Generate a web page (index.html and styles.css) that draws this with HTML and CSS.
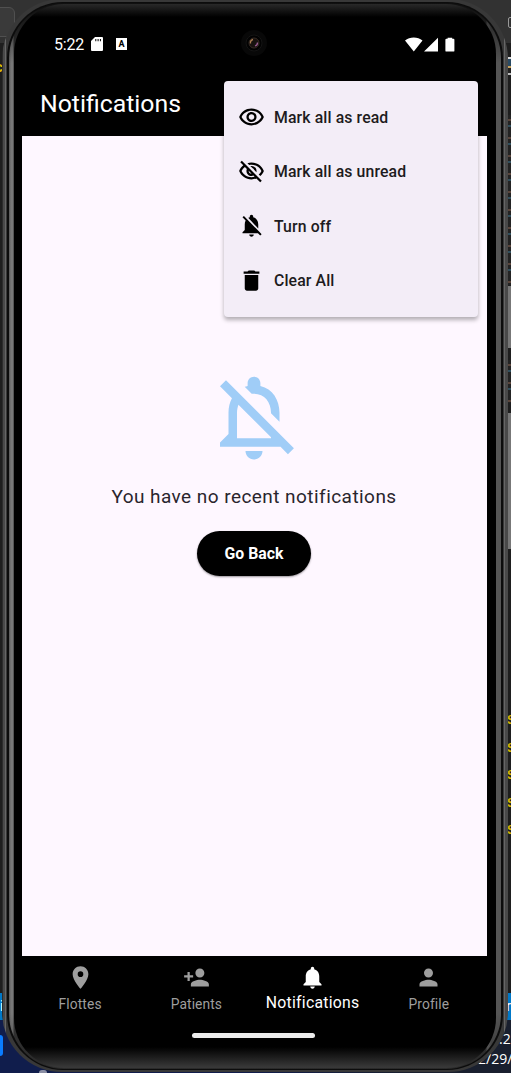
FILE: index.html
```html
<!DOCTYPE html>
<html lang="en">
<head>
<meta charset="utf-8">
<title>Notifications</title>
<link rel="stylesheet" href="styles.css">
</head>
<body>
<div class="desktop">
  <div class="editor">
    <span class="tab-box"></span>
    <span class="tab-box-right"></span>
    <span class="mark-left">c</span>
    <span class="code code-top"></span>
    <span class="code code-a"></span>
    <span class="scroll scroll-a"></span>
    <span class="code code-b"></span>
    <span class="scroll scroll-b"></span>
    <span class="warn warn-1">S</span>
    <span class="warn warn-2">S</span>
    <span class="warn warn-3">S</span>
    <span class="warn warn-4">S</span>
    <span class="warn warn-5">S</span>
  </div>
  <div class="statusline"><span>i</span><span>r</span></div>
  <div class="taskbar">
    <span class="task-app"></span>
    <span class="task-dot"></span>
    <div class="clock"><span>:2</span><span>2/29/</span></div>
  </div>
</div>

<div class="phone">
  <div class="groove">
    <div class="rim">
      <div class="glass">
        <div class="screen">
          <div class="status">
            <span class="time">5:22</span>
            <svg class="sd" viewBox="0 0 12 14"><path fill="#fff" fill-rule="evenodd" d="M4 0h7a1 1 0 0 1 1 1v12a1 1 0 0 1-1 1H1a1 1 0 0 1-1-1V4zM4.3 2v2.3h1V2zm2.3 0v2.3h1V2zm2.3 0v2.3h1V2z"/></svg>
            <span class="abox">A</span>
            <svg class="camera" viewBox="0 0 28 28"><circle cx="14" cy="14" r="13" fill="#080808"/><circle cx="14" cy="14" r="8" fill="#020202" stroke="#141414"/><circle cx="14" cy="14" r="5" fill="#17120f" stroke="#382b25"/><path d="M10.500 14.500a3.500 3.500 0 0 1 2.500-4" stroke="#a87b50" stroke-width="1.300" fill="none"/><path d="M15 17a3.500 3.500 0 0 0 2.500-3.500" stroke="#9a5b90" stroke-width="1.300" fill="none"/></svg>
            <svg class="signals" viewBox="0 0 51 15"><path fill="#fff" d="M0 3.500C4.700-.6 12.800-.6 17.500 3.500L8.800 14.500zM19 14.500L33 .7v13.800zM42.600.8h4.600v1h1.300a.9.9 0 0 1 .9.9v11a.9.9 0 0 1-.9.9h-7.200a.9.9 0 0 1-.9-.9v-11a.9.9 0 0 1 .9-.9h1.300z"/></svg>
          </div>
          <header class="appbar"><h1>Notifications</h1></header>
          <main class="content">
            <svg class="empty-icon" viewBox="0 0 24 24"><path d="M12 22c1.100 0 2-.9 2-2h-4c0 1.100.9 2 2 2zm0-15.500c2.490 0 4 2.020 4 4.500v.1l2 2V11c0-3.070-1.630-5.640-4.500-6.320V4c0-.83-.67-1.500-1.500-1.500s-1.500.67-1.500 1.500v.68c-.24.060-.47.150-.69.230l1.640 1.640c.18-.02.36-.05.55-.05zM5.410 3.350L4 4.760l2.810 2.810C6.290 8.570 6 9.730 6 11v5l-2 2v1h14.240l1.740 1.740 1.410-1.410L5.410 3.350zM16 17H8v-6c0-.68.12-1.320.34-1.900L16 16.760V17z"/></svg>
            <p class="empty-text">You have no recent notifications</p>
            <button class="back">Go Back</button>
          </main>
          <nav class="tabs">
            <a class="tab"><svg viewBox="0 0 24 24"><path d="M12 2C8.130 2 5 5.130 5 9c0 5.250 7 13 7 13s7-7.750 7-13c0-3.870-3.130-7-7-7zm0 9.500a2.500 2.500 0 0 1 0-5 2.500 2.500 0 0 1 0 5z"/></svg><span>Flottes</span></a>
            <a class="tab"><svg viewBox="0 0 24 24"><path d="M15 12c2.210 0 4-1.790 4-4s-1.790-4-4-4-4 1.790-4 4 1.790 4 4 4zm-9-2V7H4v3H1v2h3v3h2v-3h3v-2H6zm9 4c-2.670 0-8 1.340-8 4v2h16v-2c0-2.660-5.330-4-8-4z"/></svg><span>Patients</span></a>
            <a class="tab active"><svg viewBox="0 0 24 24"><path d="M12 22c1.100 0 2-.9 2-2h-4c0 1.100.89 2 2 2zm6-6v-5c0-3.070-1.640-5.640-4.500-6.320V4c0-.83-.67-1.500-1.500-1.500s-1.500.67-1.500 1.500v.68C7.630 5.360 6 7.920 6 11v5l-2 2v1h16v-1l-2-2z"/></svg><span>Notifications</span></a>
            <a class="tab"><svg viewBox="0 0 24 24"><path d="M12 12c2.210 0 4-1.790 4-4s-1.790-4-4-4-4 1.790-4 4 1.790 4 4 4zm0 2c-2.670 0-8 1.340-8 4v2h16v-2c0-2.660-5.330-4-8-4z"/></svg><span>Profile</span></a>
          </nav>
          <div class="gesture"></div>
          <div class="menu">
            <div class="item"><svg viewBox="0 0 24 24"><path d="M12 6c3.790 0 7.170 2.130 8.820 5.500C19.170 14.870 15.790 17 12 17s-7.170-2.130-8.820-5.500C4.830 8.130 8.210 6 12 6m0-2C7 4 2.730 7.110 1 11.500 2.730 15.890 7 19 12 19s9.270-3.110 11-7.500C21.270 7.110 17 4 12 4zm0 5c1.380 0 2.500 1.120 2.500 2.500S13.380 14 12 14s-2.500-1.120-2.500-2.500S10.620 9 12 9m0-2c-2.480 0-4.500 2.020-4.500 4.500S9.520 16 12 16s4.500-2.020 4.500-4.500S14.480 7 12 7z"/></svg><span>Mark all as read</span></div>
            <div class="item"><svg viewBox="0 0 24 24"><path d="M12 6c3.790 0 7.170 2.130 8.820 5.500-.59 1.220-1.420 2.270-2.410 3.120l1.410 1.410c1.390-1.230 2.490-2.770 3.180-4.530C21.270 7.110 17 4 12 4c-1.270 0-2.490.2-3.640.57l1.650 1.650C10.660 6.090 11.320 6 12 6zm-1.070 1.140L13 9.210c.57.25 1.030.71 1.280 1.280l2.070 2.070c.08-.34.14-.7.14-1.070C16.500 9.010 14.480 7 12 7c-.37 0-.72.05-1.070.14zM2.010 3.870l2.680 2.680C3.060 7.830 1.770 9.530 1 11.500 2.730 15.890 7 19 12 19c1.520 0 2.980-.29 4.320-.82l3.420 3.420 1.410-1.410L3.420 2.450 2.010 3.870zm7.500 7.500l2.610 2.610c-.04.010-.08.020-.12.020-1.380 0-2.500-1.120-2.500-2.500 0-.05.010-.08.010-.13zm-3.400-3.400l1.750 1.750c-.23.550-.36 1.150-.36 1.780 0 2.480 2.020 4.500 4.500 4.500.63 0 1.230-.13 1.770-.36l.98.98c-.88.24-1.800.38-2.750.38-3.790 0-7.170-2.130-8.820-5.500.7-1.430 1.720-2.610 2.930-3.530z"/></svg><span>Mark all as unread</span></div>
            <div class="item"><svg viewBox="0 0 24 24"><path d="M20 18.690L7.840 6.140 5.270 3.490 4 4.760l2.800 2.800v.010c-.52.990-.8 2.160-.8 3.420v5l-2 2v1h13.730l2 2L21 19.720l-1-1.030zM12 22c1.110 0 2-.89 2-2h-4c0 1.110.89 2 2 2zm6-7.320V11c0-3.080-1.640-5.640-4.500-6.320V4c0-.83-.67-1.500-1.500-1.500s-1.500.67-1.500 1.500v.68c-.15.030-.29.080-.42.120-.1.030-.2.070-.3.110-.24.090-.47.200-.7.310L18 14.680z"/></svg><span>Turn off</span></div>
            <div class="item"><svg viewBox="0 0 24 24"><path d="M6 19c0 1.100.9 2 2 2h8c1.100 0 2-.9 2-2V7H6v12zM19 4h-3.500l-1-1h-5l-1 1H5v2h14V4z"/></svg><span>Clear All</span></div>
          </div>
        </div>
      </div>
    </div>
  </div>
</div>
</body>
</html>
```
FILE: styles.css
```css
* { box-sizing: border-box; }
body {
  margin: 0;
  position: relative;
  width: 511px;
  height: 1073px;
  overflow: hidden;
  font-family: Roboto, "Liberation Sans", sans-serif;
}
svg { display: block; }

/* Desktop behind the emulator window */
.desktop { display: flex; flex-direction: column; height: 1073px; background: #1e1e1e; }
.editor {
  position: relative;
  height: 993px;
  background: linear-gradient(#323232 0 43px, #1e1e1e 43px);
}
.editor span { position: absolute; }
.tab-box { left: -10px; top: 7px; width: 25px; height: 30px; border: 1px solid #505050; border-radius: 6px; background: #3a3a3a; }
.tab-box-right { left: 508px; top: 17px; width: 10px; height: 11px; border: 1px solid #999; border-radius: 2px; }
.mark-left { left: -5px; top: 58px; font-size: 15px; font-weight: 700; color: #d9b800; }
.code { left: 508px; width: 3px; opacity: .6; background: repeating-linear-gradient(#272727 0 4px, #826050 4px 6px, #272727 6px 10px, #3e7188 10px 12px, #272727 12px 18px); }
.code-top { top: 57px; height: 18px; opacity: 1; background: linear-gradient(#d8d8d8 0 2px, #294a63 2px 9px, #c9a25b 9px 11px, #222 11px 16px, #bbb 16px); }
.code-a { top: 115px; height: 170px; }
.code-b { top: 360px; height: 43px; }
.scroll { left: 508px; width: 3px; background: #777; }
.scroll-a { top: 286px; height: 62px; }
.scroll-b { top: 413px; height: 136px; }
.warn { left: 507px; font: 700 13px "Liberation Mono", monospace; color: #d1b300; }
.warn-1 { top: 713px; }
.warn-2 { top: 741px; }
.warn-3 { top: 768px; }
.warn-4 { top: 796px; }
.warn-5 { top: 823px; }
.statusline { display: flex; justify-content: space-between; height: 27px; line-height: 27px; background: #0078c8; color: #fff; font-size: 14px; }
.taskbar { position: relative; flex: 1; background: linear-gradient(90deg, #101d4c 0 50%, #191f2e 80%); }
.task-app { position: absolute; left: -20px; top: 15px; width: 23px; height: 21px; border-radius: 3px; background: #0a7cff; }
.task-dot { position: absolute; left: 39px; top: 50px; width: 8px; height: 6px; border-radius: 3px; background: #8b8fa5; }
.clock { position: absolute; left: 478px; top: 9px; display: flex; flex-direction: column; line-height: 20px; font-family: "Open Sans", sans-serif; font-size: 14px; color: #fff; }
.clock span:first-child { padding-left: 21px; }

/* Device body: nested rings */
.phone { position: absolute; left: 2px; top: -1px; width: 506px; height: 1073px; padding: 3px 5px 2px; border-radius: 60px; background: linear-gradient(90deg, #2c2c2c 0 1px, #494949 1px 3px, #666 3px 4px, #383838 4px 50%, #383838 502px, #666 502px 503px, #494949 503px); }
.groove { height: 100%; padding: 1px 2px; border-radius: 56px; background: #0c0c0c; }
.rim { height: 100%; padding: 1px 5px; border-radius: 55px; background: linear-gradient(rgba(10,10,10,.85), transparent 60px, transparent 1010px, rgba(40,40,40,.8)), linear-gradient(90deg, #555 0, #777 2px, #777 4px, #333 5px, #333 477px, #777 478px, #777 480px, #555 482px); }
.glass { height: 100%; padding: 12px 9px 16px 8px; border-radius: 50px; background: linear-gradient(#292929, #000 13px, #000 1043px, #383838 1063px); }
.screen { position: relative; display: flex; flex-direction: column; height: 100%; }

.status { position: relative; display: flex; align-items: center; height: 56px; padding: 0 31px 0 32px; color: #fff; }
.time { width: 37px; font-size: 16px; letter-spacing: -.2px; }
.sd { width: 12px; height: 14px; }
.abox { display: flex; align-items: center; justify-content: center; width: 11px; height: 12px; margin-left: 13px; background: #fff; color: #000; font-size: 9px; font-weight: 700; }
.camera { position: absolute; left: 218px; top: 13px; width: 28px; height: 28px; }
.signals { width: 51px; height: 15px; margin-left: auto; }

.appbar { display: flex; align-items: center; height: 64px; padding-left: 18px; color: #fff; }
.appbar h1 { margin: 0; font-size: 24.8px; font-weight: 400; line-height: 30px; }

.content { display: flex; flex-direction: column; align-items: center; height: 820px; padding: 230px 1px 0 0; background: #fef7ff; }
.empty-icon { width: 102px; height: 102px; margin-right: 1px; fill: #a0cdf7; }
.empty-text { margin: 17px 0 0; font-size: 19px; line-height: 24px; letter-spacing: .45px; white-space: nowrap; color: #29252d; }
.back { width: 114px; height: 45px; margin-top: 22px; border: 0; border-radius: 23px; background: #000; color: #fff; font: 700 15.8px Roboto, sans-serif; box-shadow: 0 1px 2px rgba(0,0,0,.4); }

.tabs { display: flex; height: 63px; padding-top: 8px; }
.tab { flex: 1; display: flex; flex-direction: column; align-items: center; color: #9e9e9e; font-size: 13.8px; line-height: 18px; }
.tab svg { width: 27px; height: 27px; fill: currentColor; }
.tab span { margin-top: 4px; letter-spacing: .1px; white-space: nowrap; }
.tab.active { color: #fff; font-size: 15.8px; }
.tab.active span { margin-top: 3px; letter-spacing: .25px; }
.gesture { width: 123px; height: 5px; margin: 14px auto 0 170px; border-radius: 3px; background: #ececec; }

.menu { position: absolute; left: 202px; top: 65px; width: 254px; height: 236px; padding: 9px 14px; border-radius: 4px; background: #f3edf7; box-shadow: 0 3px 4px rgba(0,0,0,.3); }
.item { display: flex; align-items: center; height: 54.3px; gap: 9px; color: #1d1b20; font-size: 15.8px; font-weight: 500; letter-spacing: .12px; }
.item svg { width: 27px; height: 27px; fill: #000; }
.item span { padding-top: 1px; }
```
